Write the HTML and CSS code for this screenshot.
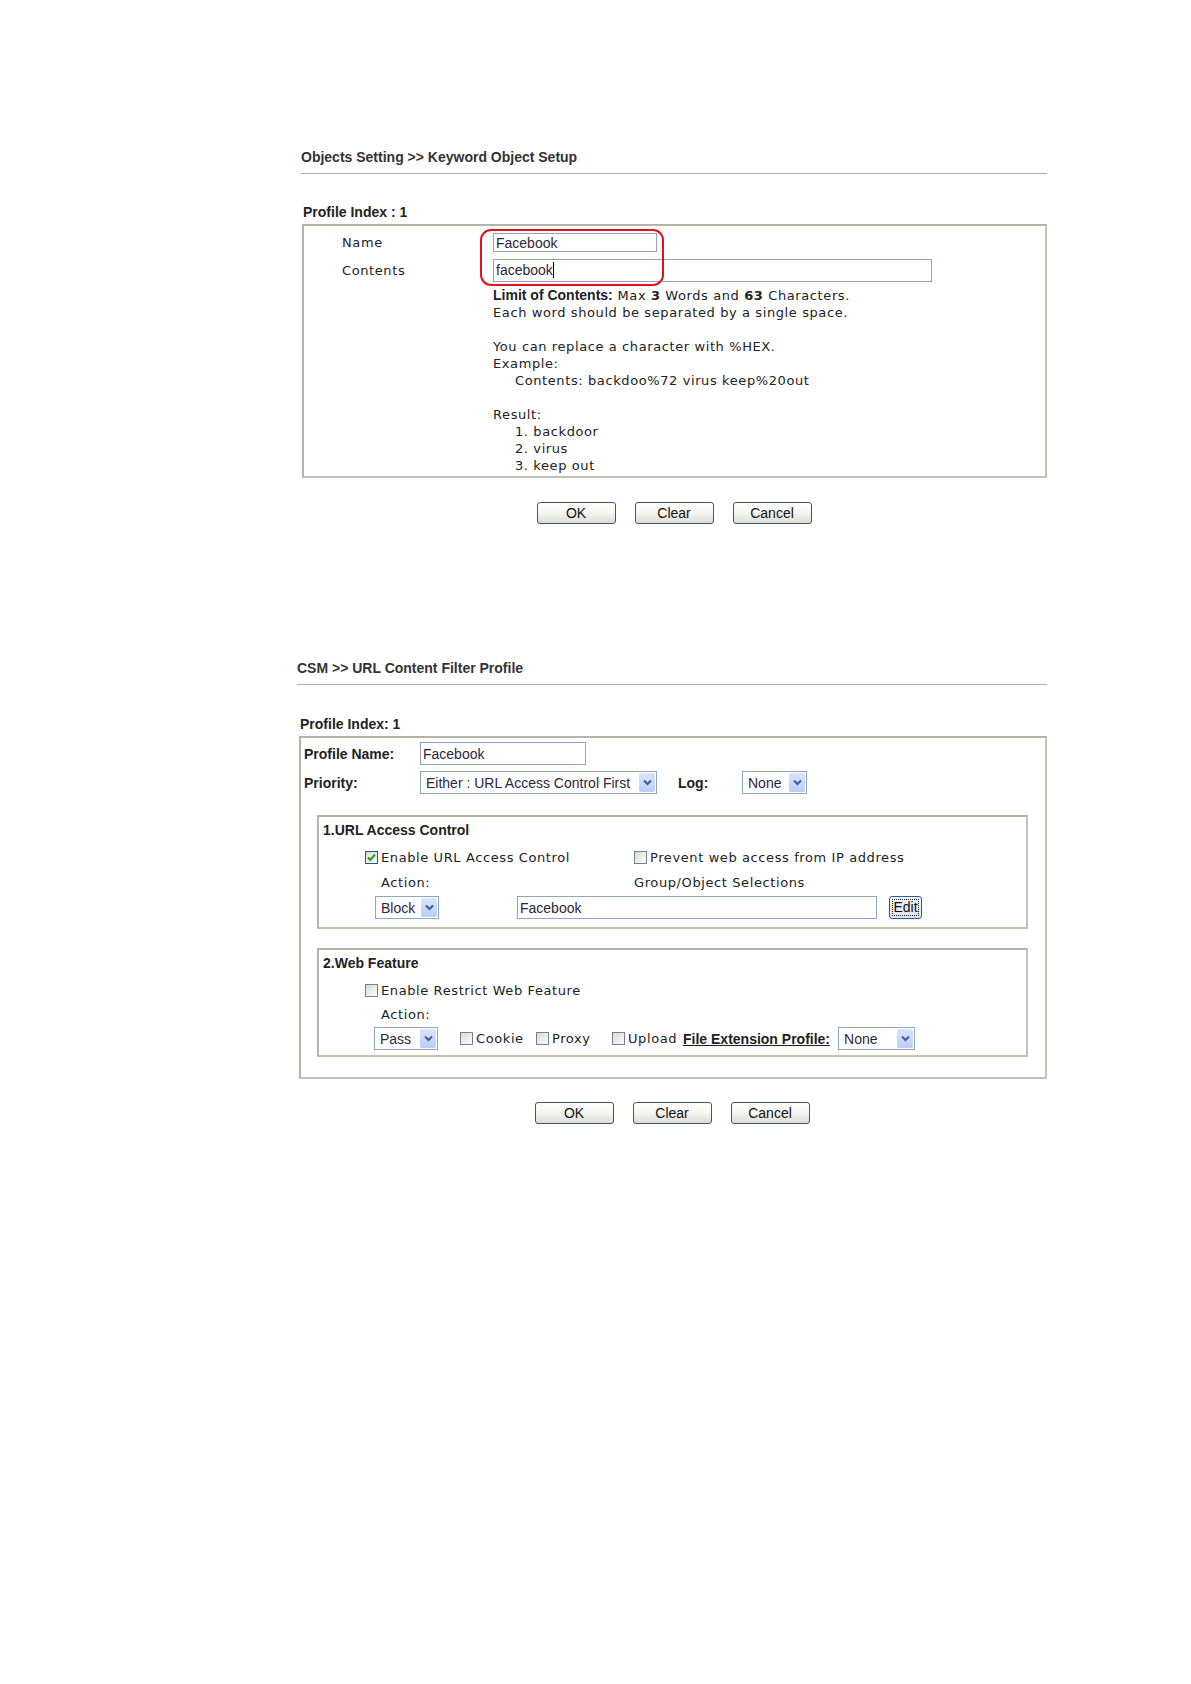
FILE: index.html
```html
<!DOCTYPE html>
<html lang="en">
<head>
	<meta charset="UTF-8">
	<title>Keyword Object Setup / URL Content Filter Profile</title>
	<link rel="stylesheet" href="styles.css">
</head>
<body>
	<div class="page">
		<div class="panel" id="keyword">
			<h2 class="panel-title">Objects Setting &gt;&gt; Keyword Object Setup</h2>
			<div class="profile-index">Profile Index : 1</div>
			<div class="box kw-box">
				<div class="kw-row">
					<span class="kw-label">Name</span>
					<input class="txt kw-name" type="text" value="Facebook">
				</div>
				<div class="kw-row">
					<span class="kw-label">Contents</span>
					<span class="txt kw-contents">facebook<i class="caret"></i></span>
				</div>
				<div class="kw-help">
					<p><b class="arial">Limit of Contents:</b> Max <b>3</b> Words and <b>63</b> Characters.</p>
					<p>Each word should be separated by a single space.</p>
					<p>&nbsp;</p>
					<p>You can replace a character with %HEX.</p>
					<p>Example:</p>
					<p class="indent">Contents: backdoo%72 virus keep%20out</p>
					<p>&nbsp;</p>
					<p>Result:</p>
					<p class="indent">1. backdoor</p>
					<p class="indent">2. virus</p>
					<p class="indent">3. keep out</p>
				</div>
				<div class="mark"></div>
			</div>
			<div class="btn-row">
				<button class="btn">OK</button>
				<button class="btn">Clear</button>
				<button class="btn">Cancel</button>
			</div>
		</div>

		<div class="panel" id="url-filter">
			<h2 class="panel-title">CSM &gt;&gt; URL Content Filter Profile</h2>
			<div class="profile-index">Profile Index: 1</div>
			<div class="box uf-box">
				<div class="uf-row">
					<span class="uf-label">Profile Name:</span>
					<input class="txt uf-name" type="text" value="Facebook">
				</div>
				<div class="uf-row">
					<span class="uf-label">Priority:</span>
					<span class="sel sel-priority">
						<span class="sel-text">Either : URL Access Control First</span>
						<span class="sel-btn"><svg width="9" height="7" viewBox="0 0 9 7"><path d="M1 1.5L4.5 5L8 1.5" fill="none" stroke="#3f5d8f" stroke-width="2"/></svg></span>
					</span>
					<span class="uf-label uf-log">Log:</span>
					<span class="sel sel-log">
						<span class="sel-text">None</span>
						<span class="sel-btn"><svg width="9" height="7" viewBox="0 0 9 7"><path d="M1 1.5L4.5 5L8 1.5" fill="none" stroke="#3f5d8f" stroke-width="2"/></svg></span>
					</span>
				</div>

				<div class="box sub">
					<div class="sub-title">1.URL Access Control</div>
					<div class="sub-check">
						<span class="chk chk-first"><span class="cb on"><svg width="11" height="11" viewBox="0 0 11 11"><path d="M2 5.5L4.3 8L9 2.5" fill="none" stroke="#22a022" stroke-width="2"/></svg></span>Enable URL Access Control</span>
						<span class="chk"><span class="cb"></span>Prevent web access from IP address</span>
					</div>
					<div class="sub-action">
						<span class="act-label">Action:</span>
						<span>Group/Object Selections</span>
					</div>
					<div class="sub-ctrl">
						<span class="sel sel-small">
							<span class="sel-text">Block</span>
							<span class="sel-btn"><svg width="9" height="7" viewBox="0 0 9 7"><path d="M1 1.5L4.5 5L8 1.5" fill="none" stroke="#3f5d8f" stroke-width="2"/></svg></span>
						</span>
						<input class="txt uf-group" type="text" value="Facebook">
						<button class="btn-edit"><span>Edit</span></button>
					</div>
				</div>

				<div class="box sub sub-web">
					<div class="sub-title">2.Web Feature</div>
					<div class="sub-check">
						<span class="chk chk-first"><span class="cb"></span>Enable Restrict Web Feature</span>
					</div>
					<div class="sub-action">
						<span class="act-label">Action:</span>
					</div>
					<div class="sub-ctrl">
						<span class="sel sel-small">
							<span class="sel-text">Pass</span>
							<span class="sel-btn"><svg width="9" height="7" viewBox="0 0 9 7"><path d="M1 1.5L4.5 5L8 1.5" fill="none" stroke="#3f5d8f" stroke-width="2"/></svg></span>
						</span>
						<span class="chk chk-cookie"><span class="cb"></span>Cookie</span>
						<span class="chk chk-proxy"><span class="cb"></span>Proxy</span>
						<span class="chk chk-upload"><span class="cb"></span>Upload</span>
						<a class="ext-link">File Extension Profile:</a>
						<span class="sel sel-ext">
							<span class="sel-text">None</span>
							<span class="sel-btn"><svg width="9" height="7" viewBox="0 0 9 7"><path d="M1 1.5L4.5 5L8 1.5" fill="none" stroke="#3f5d8f" stroke-width="2"/></svg></span>
						</span>
					</div>
				</div>
			</div>
			<div class="btn-row">
				<button class="btn">OK</button>
				<button class="btn">Clear</button>
				<button class="btn">Cancel</button>
			</div>
		</div>
	</div>
</body>
</html>
```

FILE: styles.css
```css
*{
	margin: 0;
	padding: 0;
	box-sizing: border-box;
}
body{
	background: #fff;
	color: #1e1e1e;
	font-family: "Liberation Sans", Arial, sans-serif;
	font-size: 14px;
}
.page{
	padding-top: 149px;
}

/* shared parts */
.panel-title{
	font-size: 14px;
	font-weight: bold;
	line-height: 16px;
	color: #333;
	padding-bottom: 8px;
	border-bottom: 1px solid #acacac;
}
.profile-index{
	font-weight: bold;
	line-height: 16px;
	color: #222;
}
.box{
	border: 2px solid #c2c2b6;
	border-top-color: #b4b4a8;
	border-left-color: #b4b4a8;
}
.txt{
	display: block;
	border: 1px solid #8fa6c0;
	background: #fff;
	color: #2e2638;
	font-family: "Liberation Sans", Arial, sans-serif;
	font-size: 14px;
	padding: 0 2px;
	outline: none;
}
.kw-label,
.kw-help,
.chk,
.sub-action{
	font-family: "DejaVu Sans", Verdana, sans-serif;
	font-size: 13px;
	letter-spacing: 0.6px;
	color: #222;
}
.btn-row{
	display: flex;
	justify-content: center;
	gap: 19px;
}
.btn{
	width: 79px;
	height: 22px;
	border: 1px solid #3e5670;
	border-radius: 3px;
	background: linear-gradient(#ffffff, #f3f3ee 55%, #dcdcd4);
	font-family: "Liberation Sans", Arial, sans-serif;
	font-size: 14px;
	color: #111;
}

/* keyword object */
#keyword{
	margin-left: 301px;
	width: 746px;
}
#keyword .profile-index{
	margin-top: 30px;
	padding-left: 2px;
}
.kw-box{
	position: relative;
	margin: 4px 0 0 1px;
	padding: 7px 0 2px 38px;
}
.kw-row{
	display: flex;
	align-items: center;
}
.kw-row + .kw-row{
	margin-top: 7px;
}
.kw-label{
	width: 151px;
	flex: none;
}
.kw-name{
	width: 164px;
	height: 19px;
}
.kw-contents{
	width: 439px;
	height: 23px;
	line-height: 21px;
}
.caret{
	display: inline-block;
	width: 1px;
	height: 16px;
	background: #000;
	vertical-align: -3px;
}
.kw-help{
	margin: 5px 0 0 151px;
	line-height: 17px;
}
.kw-help b{
	font-weight: bold;
}
.kw-help .arial{
	font-family: "Liberation Sans", Arial, sans-serif;
	font-size: 14px;
	letter-spacing: 0;
}
.kw-help .indent{
	padding-left: 22px;
}
.mark{
	position: absolute;
	left: 176px;
	top: 3px;
	width: 184px;
	height: 57px;
	border: 2px solid #e3111b;
	border-radius: 11px;
}
#keyword .btn-row{
	margin-top: 24px;
}

/* url content filter */
#url-filter{
	margin: 136px 0 0 297px;
	width: 750px;
}
#url-filter .profile-index{
	margin-top: 31px;
	padding-left: 3px;
}
.uf-box{
	margin: 4px 0 0 2px;
	padding: 4px 17px 20px 3px;
}
.uf-row{
	display: flex;
	align-items: center;
	height: 23px;
}
.uf-row + .uf-row{
	margin-top: 6px;
}
.uf-label{
	width: 116px;
	flex: none;
	font-weight: bold;
	color: #222;
}
.uf-log{
	width: 64px;
	margin-left: 21px;
}
.uf-name{
	width: 166px;
	height: 23px;
}
.sel{
	display: flex;
	align-items: center;
	justify-content: space-between;
	height: 23px;
	border: 1px solid #8fa6c0;
	background: #fff;
	padding-left: 5px;
	color: #2e2638;
	font-size: 14px;
	flex: none;
}
.sel-btn{
	display: flex;
	align-items: center;
	justify-content: center;
	width: 16px;
	height: 19px;
	margin-right: 1px;
	border-radius: 2px;
	background: linear-gradient(#d9e4fd, #b9cdf8);
}
.sel-priority{
	width: 237px;
}
.sel-log{
	width: 65px;
}
.sel-small{
	width: 64px;
}
.sel-ext{
	width: 77px;
	margin-left: 8px;
}
.sub{
	margin: 21px 0 0 13px;
	padding: 0 0 8px 0;
}
.sub-web{
	margin-top: 19px;
	padding-bottom: 5px;
}
.sub-title{
	height: 26px;
	line-height: 27px;
	padding-left: 4px;
	font-weight: bold;
	color: #222;
}
.sub-check{
	display: flex;
	align-items: center;
	height: 28px;
	padding-left: 46px;
}
.chk{
	display: flex;
	align-items: center;
	flex: none;
}
.chk-first{
	width: 269px;
}
.cb{
	display: flex;
	align-items: center;
	justify-content: center;
	width: 13px;
	height: 13px;
	margin-right: 3px;
	border: 1px solid #76818e;
	background: linear-gradient(135deg, #dcdcd6, #fbfbf9);
	flex: none;
}
.cb.on{
	border-color: #2a5783;
}
.sub-action{
	display: flex;
	align-items: center;
	height: 22px;
	padding-left: 62px;
}
.sub-web .sub-action{
	height: 20px;
}
.act-label{
	width: 253px;
}
.sub-ctrl{
	display: flex;
	align-items: center;
	height: 23px;
	margin-top: 3px;
	padding-left: 56px;
}
.sub-web .sub-ctrl{
	padding-left: 55px;
}
.uf-group{
	width: 360px;
	height: 23px;
	margin-left: 78px;
}
.btn-edit{
	width: 33px;
	height: 23px;
	margin-left: 12px;
	padding: 2px;
	border: 1px solid #2b5aa3;
	border-radius: 3px;
	background: linear-gradient(#f6f8fc, #dce3ef);
	font-family: "Liberation Sans", Arial, sans-serif;
	font-size: 14px;
	color: #111;
}
.btn-edit span{
	display: block;
	height: 17px;
	line-height: 15px;
	border: 1px dotted #222;
}
.chk-cookie{
	width: 76px;
	margin-left: 22px;
}
.chk-proxy{
	width: 76px;
}
.chk-upload{
	width: 71px;
}
.ext-link{
	font-weight: bold;
	text-decoration: underline;
	color: #1e1e1e;
}
#url-filter .btn-row{
	margin-top: 23px;
}
```
